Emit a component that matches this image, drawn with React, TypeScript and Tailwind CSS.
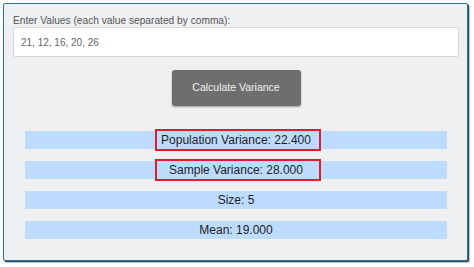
import { FC } from "react";

interface ResultRowProps {
  label: string;
  highlighted?: boolean;
}

const ResultRow: FC<ResultRowProps> = ({ label, highlighted }) => {
  return (
    <div className="flex h-[18px] items-center justify-center bg-[#bddbfd] text-[12px] text-[#1d1d1d]">
      {highlighted ? (
        <span className="ml-[4px] flex h-[22px] w-[166px] items-center justify-center border-2 border-[#e01b2c] pr-[4px]">
          {label}
        </span>
      ) : (
        <span>{label}</span>
      )}
    </div>
  );
};

const App: FC = () => {
  const results = [
    { label: "Population Variance: 22.400", highlighted: true },
    { label: "Sample Variance: 28.000", highlighted: true },
    { label: "Size: 5" },
    { label: "Mean: 19.000" },
  ];

  return (
    <div className="h-[267px] w-[474px] bg-white pl-[3px] pt-[3px] font-['Liberation_Sans',Arial,sans-serif]">
      <div className="h-[258px] w-[465px] rounded-[2px] border border-[#2a6f9c] bg-[#eef0f2] pl-[9px] pr-[8px] pt-[11px] shadow-[1px_1px_0_#34495c,2px_2px_1px_rgba(0,0,0,0.25)]">
        <label className="block h-[12px] text-[10.2px] leading-[12px] text-[#555]">
          Enter Values (each value separated by comma):
        </label>
        <div className="flex h-[30px] items-center rounded-[2px] border border-[#d6d8da] bg-white px-[7px] text-[10px] text-[#666]">
          21, 12, 16, 20, 26
        </div>
        <button className="mx-auto mt-[13px] flex h-[36px] w-[129px] items-center justify-center rounded-[3px] bg-[#6e6e6e] text-[10.5px] text-[#f2f2f2] shadow-[0_1px_2px_rgba(0,0,0,0.35)]">
          Calculate Variance
        </button>
        <div className="mx-[12px] mt-[25px] flex flex-col gap-[12px]">
          {results.map((r) => (
            <ResultRow key={r.label} label={r.label} highlighted={r.highlighted} />
          ))}
        </div>
      </div>
    </div>
  );
};

export default App;
